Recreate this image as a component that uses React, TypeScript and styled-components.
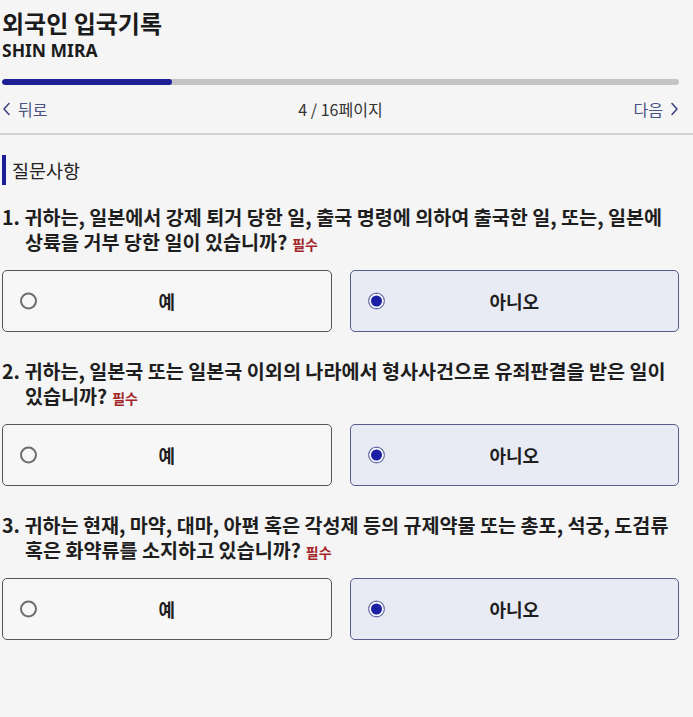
import styled, { createGlobalStyle } from 'styled-components';

const GlobalStyle = createGlobalStyle`
  html, body {
    margin: 0;
    padding: 0;
    background: #f5f5f5;
  }
  body {
    font-family: "Noto Sans CJK KR", "Noto Sans", sans-serif;
    color: #1e1e1e;
  }
`;

const Page = styled.div`
  width: 693px;
  min-height: 717px;
  background: #f5f5f5;
`;

const Header = styled.header`
  padding: 7px 14px 0 2px;
`;

const Title = styled.h1`
  margin: 0;
  font-size: 24px;
  font-weight: 700;
  line-height: 32px;
  color: #1b1b1b;
`;

const Name = styled.div`
  font-family: "Noto Sans", "Noto Sans CJK KR", sans-serif;
  font-size: 17.5px;
  font-weight: 700;
  line-height: 22px;
  color: #1b1b1b;
`;

const Track = styled.div`
  margin-top: 18px;
  height: 6px;
  border-radius: 3px;
  background: #c4c4c4;
  overflow: hidden;
`;

const Fill = styled.div`
  height: 100%;
  border-radius: 3px;
  background: #1c1f95;
`;

const NavRow = styled.nav`
  display: flex;
  align-items: center;
  justify-content: space-between;
  height: 48px;
  font-size: 16px;
`;

const NavLink = styled.span`
  display: flex;
  align-items: center;
  gap: 7px;
  color: #4a5283;
`;

const PageCount = styled.span`
  color: #333;
`;

const Divider = styled.hr`
  margin: 0;
  border: none;
  border-top: 2px solid #d2d2d2;
`;

const Body = styled.main`
  padding: 20px 14px 0 2px;
`;

const SectionTitle = styled.div`
  display: flex;
  align-items: center;
  gap: 6px;
  font-size: 18.5px;
  line-height: 30px;
  color: #222;

  &::before {
    content: '';
    width: 4px;
    height: 30px;
    background: #1c1f95;
  }
`;

const Question = styled.section`
  margin-top: 19px;

  & + & {
    margin-top: 26px;
  }
`;

const QuestionText = styled.p`
  margin: 0;
  padding-left: 23px;
  text-indent: -23px;
  font-size: 19.6px;
  font-weight: 700;
  line-height: 25px;
  word-break: keep-all;
  color: #1e1e1e;
`;

const Required = styled.span`
  margin-left: 5px;
  font-size: 14px;
  font-weight: 700;
  line-height: 1;
  color: #a3262b;
`;

const Choices = styled.div`
  display: grid;
  grid-template-columns: 1fr 1fr;
  gap: 18px;
  margin-top: 16px;
`;

const Choice = styled.label<{ $selected: boolean }>`
  position: relative;
  display: flex;
  align-items: center;
  justify-content: center;
  height: 62px;
  box-sizing: border-box;
  border-radius: 5px;
  border: 1.5px solid ${(p) => (p.$selected ? '#565d8e' : '#555')};
  background: ${(p) => (p.$selected ? '#e8ebf4' : '#f7f7f7')};
  font-size: 18px;
  font-weight: 700;
  color: #1e1e1e;
  cursor: pointer;
`;

const Radio = styled.span<{ $selected: boolean }>`
  position: absolute;
  left: 17px;
  top: 50%;
  transform: translateY(-50%);
  width: 17px;
  height: 17px;
  box-sizing: border-box;
  border-radius: 50%;
  border: ${(p) => (p.$selected ? '1.5px solid #7a80aa' : '2px solid #6e6e6e')};
  background: ${(p) => (p.$selected ? '#1a1fa3' : 'transparent')};
  box-shadow: ${(p) => (p.$selected ? 'inset 0 0 0 2px #f5f6fb' : 'none')};
`;

const Chevron = ({ dir }: { dir: 'left' | 'right' }) => (
  <svg width="9" height="14" viewBox="0 0 9 14" fill="none">
    <path
      d={dir === 'left' ? 'M7 1.5 L2 7 L7 12.5' : 'M2 1.5 L7 7 L2 12.5'}
      stroke="#3d4680"
      strokeWidth="1.6"
      strokeLinecap="round"
      strokeLinejoin="round"
    />
  </svg>
);

const questions = [
  '1. 귀하는, 일본에서 강제 퇴거 당한 일, 출국 명령에 의하여 출국한 일, 또는, 일본에 상륙을 거부 당한 일이 있습니까?',
  '2. 귀하는, 일본국 또는 일본국 이외의 나라에서 형사사건으로 유죄판결을 받은 일이 있습니까?',
  '3. 귀하는 현재, 마약, 대마, 아편 혹은 각성제 등의 규제약물 또는 총포, 석궁, 도검류 혹은 화약류를 소지하고 있습니까?',
];

const App = () => {
  const page = 4;
  const total = 16;

  return (
    <Page>
      <GlobalStyle />
      <Header>
        <Title>외국인 입국기록</Title>
        <Name>SHIN MIRA</Name>
        <Track>
          <Fill style={{ width: `${(170 / 677) * 100}%` }} />
        </Track>
        <NavRow>
          <NavLink>
            <Chevron dir="left" />
            뒤로
          </NavLink>
          <PageCount>
            {page} / {total}페이지
          </PageCount>
          <NavLink>
            다음
            <Chevron dir="right" />
          </NavLink>
        </NavRow>
      </Header>
      <Divider />
      <Body>
        <SectionTitle>질문사항</SectionTitle>
        {questions.map((q) => (
          <Question key={q}>
            <QuestionText>
              {q}
              <Required>필수</Required>
            </QuestionText>
            <Choices>
              <Choice $selected={false}>
                <Radio $selected={false} />예
              </Choice>
              <Choice $selected={true}>
                <Radio $selected={true} />아니오
              </Choice>
            </Choices>
          </Question>
        ))}
      </Body>
    </Page>
  );
};

export default App;
